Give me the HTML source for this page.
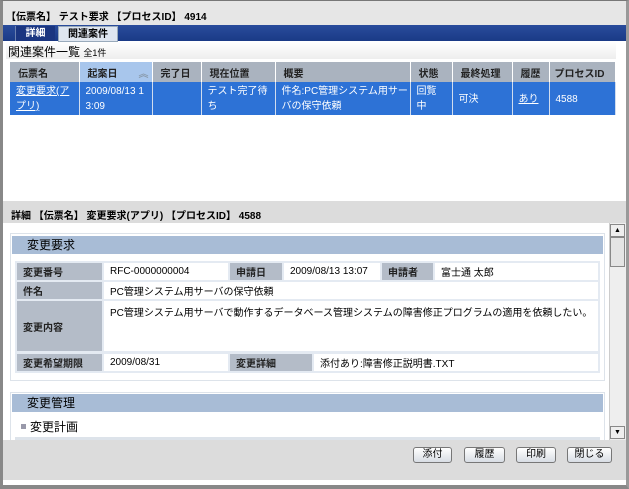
<!DOCTYPE html>
<html><head><meta charset="utf-8"><style>
*{box-sizing:border-box;margin:0;padding:0}
body{width:629px;height:489px;overflow:hidden;background:#fff;font-family:"Liberation Sans","Noto Sans CJK JP",sans-serif;font-size:10px;color:#000;position:relative}
.a{position:absolute}
.frame{left:0;top:0;width:629px;height:489px;border:1px solid #777;border-left:3px solid #888;border-right:3px solid #999;border-bottom:4px solid #888;background:#fff}
.b{font-weight:bold}
table{border-collapse:collapse;table-layout:fixed}
.hd td{background:#aab3bf;border-right:1px solid #fff;font-weight:bold;padding-left:8px;height:20px;color:#222;white-space:nowrap;overflow:hidden}
.rw td{background:#2d72d6;color:#fff;border-right:1px solid #d0dcee;padding:2px 2px 0 6px;vertical-align:top;line-height:15px;height:33px;white-space:nowrap;overflow:hidden}
.dt td{border:2px solid #e4eaf2;height:19px;padding-left:6px;white-space:nowrap;overflow:hidden}
.dt td.l{background:#b4bcc8;font-weight:bold;color:#222}
.btn{top:447px;height:16px;border:1px solid #777;border-radius:3px;background:linear-gradient(#fff,#d8dde4);text-align:center;line-height:14px;font-size:10px}
</style></head><body>
<div class="a frame"></div>
<div class="a" style="left:3px;top:1px;width:623px;height:24px;background:#e6e6e6"></div>
<div class="a b" style="left:6px;top:8px;font-size:10px">【伝票名】 テスト要求 【プロセスID】 4914</div>
<div class="a" style="left:3px;top:25px;width:623px;height:16px;background:linear-gradient(#2a4c9c,#1a3a86)"></div>
<div class="a b" style="left:15px;top:26px;width:40px;height:15px;background:#1a3580;color:#fff;text-align:center;line-height:15px;border-left:1px solid #6a80b0">詳細</div>
<div class="a b" style="left:58px;top:26px;width:60px;height:16px;background:#dfe6f0;text-align:center;line-height:15px;border:1px solid #9ab">関連案件</div>
<div class="a" style="left:6px;top:42px;width:610px;height:17px;background:linear-gradient(#fff,#eee)"></div>
<div class="a" style="left:8px;top:43px;font-size:12px">関連案件一覧 <span style="font-size:9px">全1件</span></div>
<table class="a" style="left:10px;top:62px;width:606px">
<tr class="hd"><td style="width:69px">伝票名</td><td style="width:73px;background:#a8c6ec">起案日<span style="float:right;color:#8899aa;padding-right:3px">︽</span></td><td style="width:49px">完了日</td><td style="width:74px">現在位置</td><td style="width:135px">概要</td><td style="width:42px">状態</td><td style="width:60px">最終処理</td><td style="width:37px">履歴</td><td style="padding-left:5px">プロセスID</td></tr>
<tr class="rw"><td><u>変更要求(ア<br>プリ)</u></td><td>2009/08/13 1<br>3:09</td><td></td><td>テスト完了待<br>ち</td><td>件名:PC管理システム用サー<br>バの保守依頼</td><td>回覧<br>中</td><td style="vertical-align:middle">可決</td><td style="vertical-align:middle"><u>あり</u></td><td style="vertical-align:middle">4588</td></tr>
</table>
<div class="a" style="left:3px;top:201px;width:623px;height:22px;background:#dcdcdc"></div>
<div class="a b" style="left:11px;top:207px;font-size:10px">詳細 【伝票名】 変更要求(アプリ) 【プロセスID】 4588</div>
<div class="a" style="left:609px;top:223px;width:17px;height:217px;background:#eee;border-left:1px solid #ccc"></div>
<div class="a" style="left:610px;top:224px;width:15px;height:13px;border:1px solid #888;background:#eee;font-size:7px;text-align:center;line-height:11px">▲</div>
<div class="a" style="left:610px;top:237px;width:15px;height:30px;border:1px solid #888;background:#e4e4e4"></div>
<div class="a" style="left:610px;top:426px;width:15px;height:13px;border:1px solid #888;background:#eee;font-size:7px;text-align:center;line-height:11px">▼</div>
<div class="a" style="left:10px;top:233px;width:595px;height:148px;border:1px solid #dde3ea"></div>
<div class="a" style="left:12px;top:236px;width:591px;height:18px;background:#a8bcd6;font-size:12px;padding-left:15px;line-height:18px">変更要求</div>
<table class="a dt" style="left:15px;top:261px;width:585px">
<tr><td class="l" style="width:87px">変更番号</td><td style="width:126px">RFC-0000000004</td><td class="l" style="width:54px">申請日</td><td style="width:98px">2009/08/13 13:07</td><td class="l" style="width:53px">申請者</td><td>富士通 太郎</td></tr>
<tr><td class="l">件名</td><td colspan="5">PC管理システム用サーバの保守依頼</td></tr>
<tr><td class="l" style="height:52px">変更内容</td><td colspan="5" style="vertical-align:top;padding-top:3px">PC管理システム用サーバで動作するデータベース管理システムの障害修正プログラムの適用を依頼したい。</td></tr>
</table>
<table class="a dt" style="left:15px;top:352px;width:585px">
<tr><td class="l" style="width:87px">変更希望期限</td><td style="width:126px">2009/08/31</td><td class="l" style="width:84px">変更詳細</td><td>添付あり:障害修正説明書.TXT</td></tr>
</table>
<div class="a" style="left:10px;top:392px;width:595px;height:48px;border:1px solid #dde3ea;border-bottom:none"></div>
<div class="a" style="left:12px;top:394px;width:591px;height:18px;background:#a8bcd6;font-size:12px;padding-left:15px;line-height:18px">変更管理</div>
<div class="a" style="left:21px;top:424px;width:5px;height:5px;background:#99a"></div>
<div class="a" style="left:30px;top:418px;font-size:12px">変更計画</div>
<div class="a" style="left:15px;top:437px;width:585px;height:3px;background:#dde3ea"></div>
<div class="a" style="left:3px;top:440px;width:623px;height:41px;background:#dcdcdc;border-bottom:1px solid #fff"></div>
<div class="a btn" style="left:413px;width:39px">添付</div>
<div class="a btn" style="left:464px;width:41px">履歴</div>
<div class="a btn" style="left:516px;width:40px">印刷</div>
<div class="a btn" style="left:567px;width:45px">閉じる</div>
</body></html>
